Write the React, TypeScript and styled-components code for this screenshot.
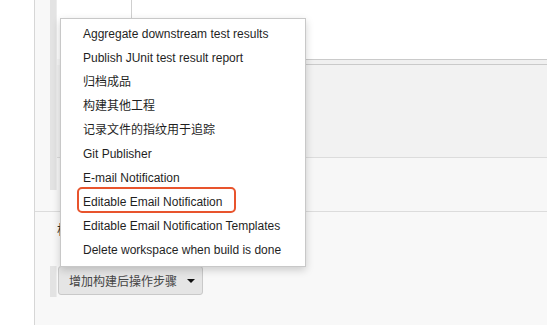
import React from 'react'
import styled, { createGlobalStyle } from 'styled-components'

const GlobalStyle = createGlobalStyle`
  html, body {
    margin: 0;
    padding: 0;
    background: #fff;
  }
  body {
    font-family: "Liberation Sans", "Noto Sans CJK SC", sans-serif;
    font-size: 12px;
    color: #222;
  }
`

const Page = styled.div`
  position: relative;
  width: 547px;
  height: 325px;
  display: flex;
  overflow: hidden;
`

const SideGap = styled.div`
  width: 34px;
  flex: none;
  background: #fff;
  border-right: 1px solid #d6d6d6;
`

const Main = styled.div`
  flex: 1;
  display: flex;
  flex-direction: column;
  background: #f8f8f8;
`

const Chunk = styled.div`
  display: flex;
  padding-left: 15px;
`

const Stripe = styled.div<{ h: number }>`
  width: 6px;
  height: ${({ h }) => h}px;
  flex: none;
  background: #e3e3e3;
  border-right: 1px solid #ececec;
`

const ChunkBody = styled.div`
  flex: 1;
  display: flex;
  flex-direction: column;
`

const TopRow = styled.div`
  height: 59px;
  display: flex;
  background: #fff;
`

const TopCell = styled.div`
  width: 74px;
  border-right: 1px solid #cfcfcf;
`

const DoubleRule = styled.div`
  height: 4px;
  margin-left: 4px;
  background: #f0f0f0;
  border-top: 1px solid #cacaca;
  border-bottom: 1px solid #cacaca;
`

const Band = styled.div<{ h: number; bg: string; rule?: boolean }>`
  height: ${({ h }) => h}px;
  background: ${({ bg }) => bg};
  border-bottom: ${({ rule }) => (rule ? '1px solid #dcdcdc' : 'none')};
`

const Section = styled.div`
  border-top: 1px solid #dcdcdc;
  padding: 10px 0 0 15px;
  display: flex;
  flex-direction: column;
`

const SectionTitle = styled.div`
  padding-left: 7px;
  height: 44px;
  line-height: 16px;
  font-size: 13px;
  color: #333;
`

const ButtonRow = styled.div`
  display: flex;
  align-items: stretch;
  gap: 1px;
`

const AddButton = styled.button`
  height: 29px;
  width: 145px;
  padding: 0 0 0 10px;
  display: flex;
  align-items: center;
  gap: 10px;
  white-space: nowrap;
  background: #e5e5e5;
  border: 1px solid #c9c9c9;
  border-radius: 3px;
  font-family: inherit;
  font-size: 12px;
  color: #444;
`

const Caret = styled.span`
  width: 0;
  height: 0;
  border-left: 4px solid transparent;
  border-right: 4px solid transparent;
  border-top: 4px solid #111;
  margin-top: 1px;
`

const Menu = styled.ul`
  position: absolute;
  left: 60px;
  top: 18px;
  width: 244px;
  margin: 0;
  padding: 3px 0 4px;
  list-style: none;
  background: #fff;
  border: 1px solid #c8c8c8;
  box-shadow: 0 3px 8px rgba(0, 0, 0, 0.18);
  z-index: 5;
`

const MenuItem = styled.li`
  position: relative;
  height: 24px;
  line-height: 24px;
  padding-left: 22px;
  white-space: nowrap;
  font-size: 12px;
  color: #1f1f1f;
`

const Mark = styled.span`
  position: absolute;
  left: 16px;
  top: -3px;
  width: 155px;
  height: 22px;
  border: 2px solid #e8542d;
  border-radius: 5px;
`

const items = [
  'Aggregate downstream test results',
  'Publish JUnit test result report',
  '归档成品',
  '构建其他工程',
  '记录文件的指纹用于追踪',
  'Git Publisher',
  'E-mail Notification',
  'Editable Email Notification',
  'Editable Email Notification Templates',
  'Delete workspace when build is done',
]

export default function App() {
  return (
    <>
      <GlobalStyle />
      <Page>
        <SideGap />
        <Main>
          <Chunk>
            <Stripe h={190} />
            <ChunkBody>
              <TopRow>
                <TopCell />
              </TopRow>
              <DoubleRule />
              <Band h={92} bg="#f2f2f2" rule />
              <Band h={53} bg="#f7f7f7" />
            </ChunkBody>
          </Chunk>
          <Section>
            <SectionTitle>构建后操作</SectionTitle>
            <ButtonRow>
              <Stripe h={31} />
              <AddButton>
                增加构建后操作步骤
                <Caret />
              </AddButton>
            </ButtonRow>
          </Section>
        </Main>
        <Menu>
          {items.map((t) => (
            <MenuItem key={t}>
              {t === 'Editable Email Notification' && <Mark />}
              {t}
            </MenuItem>
          ))}
        </Menu>
      </Page>
    </>
  )
}
